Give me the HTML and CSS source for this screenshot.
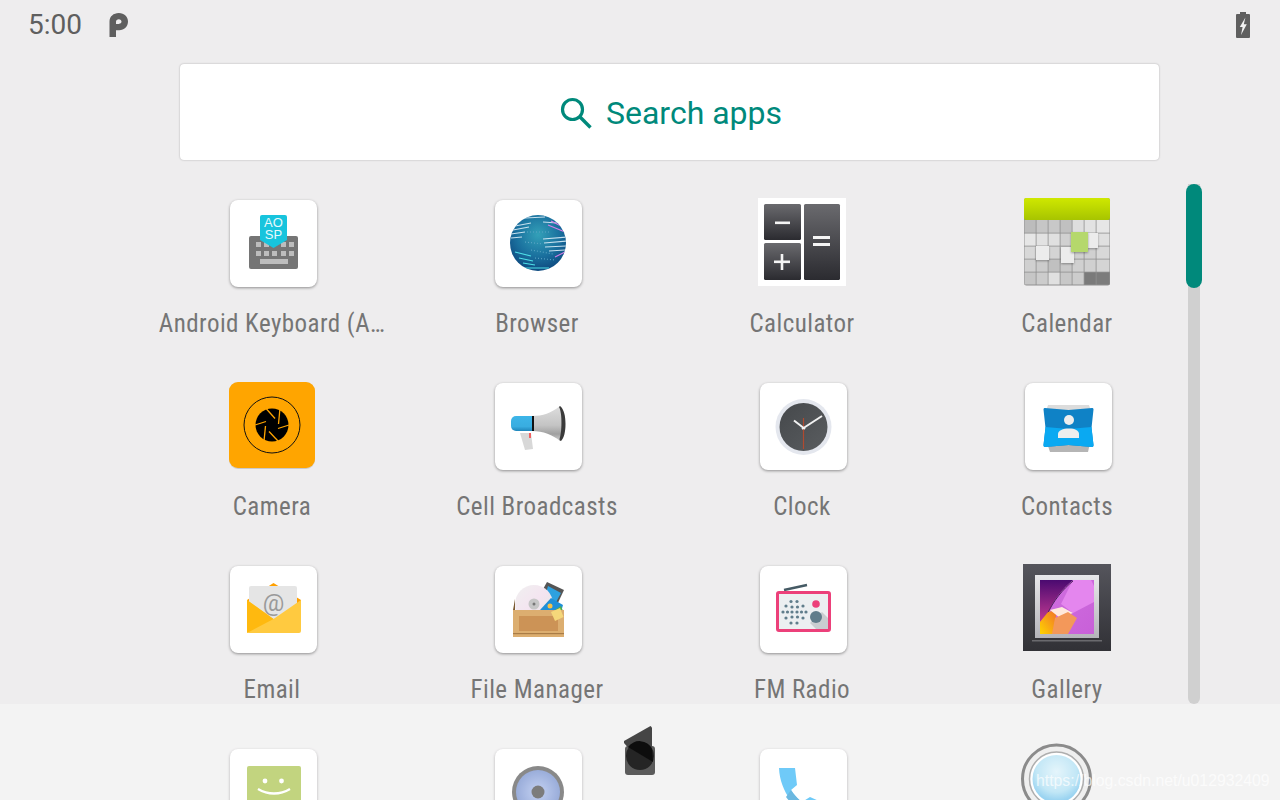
FILE: index.html
```html
<!DOCTYPE html>
<html lang="en">
<head>
<meta charset="utf-8">
<title>Apps</title>
<link rel="stylesheet" href="styles.css">
</head>
<body>
<div class="screen">
  <header class="status">
    <span class="time">5:00</span>
    <svg class="p-icon" width="20" height="26" viewBox="0 0 20 26"><path fill="#5f5f5f" d="M0.5 25V9.5C0.5 4.5 4.5 1 9.8 1 15.3 1 19 4.8 19 9.6 19 14.6 15.2 18.2 10.2 18.2H7V25ZM7 11.9H9.8C11.4 11.9 12.5 10.9 12.5 9.6 12.5 8.3 11.4 7.3 9.8 7.3 8.2 7.3 7 8.3 7 9.6Z"/></svg>
    <svg class="battery" width="14" height="26" viewBox="0 0 14 26"><path fill="#5f5f5f" d="M4 0H10V2H13A1 1 0 0 1 14 3V25A1 1 0 0 1 13 26H1A1 1 0 0 1 0 25V3A1 1 0 0 1 1 2H4Z"/><path fill="#f2f2f2" d="M9.4 5.5 3.8 15H6.6L5 23 10.8 12.2H7.8Z"/></svg>
  </header>

  <div class="search">
    <svg width="32" height="32" viewBox="0 0 32 32"><circle cx="12.5" cy="12.5" r="10" fill="none" stroke="#00897b" stroke-width="3.2"/><path d="M19.8 19.8 30.5 30.5" stroke="#00897b" stroke-width="3.4" fill="none"/></svg>
    <span class="search-text">Search apps</span>
  </div>

  <main class="grid">
    <div class="app">
      <div class="icon tile">
        <svg viewBox="0 0 87 87" width="87" height="87">
          <rect x="19" y="36" width="49" height="33" rx="2" fill="#757575"/>
          <g fill="#bdbdbd">
            <rect x="26" y="42" width="5" height="5"/><rect x="34" y="42" width="5" height="5"/><rect x="51" y="42" width="5" height="5"/><rect x="59" y="42" width="5" height="5"/>
            <rect x="26" y="51" width="5" height="5"/><rect x="34" y="51" width="5" height="5"/><rect x="42" y="51" width="5" height="5"/><rect x="51" y="51" width="5" height="5"/><rect x="59" y="51" width="5" height="5"/>
            <rect x="30" y="59" width="28" height="5"/>
          </g>
          <path d="M32 15H55A2 2 0 0 1 57 17V40L43.5 48 30 40V17A2 2 0 0 1 32 15Z" fill="#17c4dd"/>
          <text class="aosp"><tspan x="43.5" y="27">AO</tspan><tspan x="43.5" y="39">SP</tspan></text>
        </svg>
      </div>
      <span class="label">Android Keyboard (A…</span>
    </div>

    <div class="app">
      <div class="icon tile">
        <svg viewBox="0 0 87 87" width="87" height="87">
          <defs>
            <radialGradient id="globe" cx="50%" cy="35%" r="65%"><stop offset="0" stop-color="#33a0b8"/><stop offset=".6" stop-color="#1a709e"/><stop offset="1" stop-color="#0e4a80"/></radialGradient>
            <clipPath id="globeclip"><circle cx="43" cy="43" r="28"/></clipPath>
          </defs>
          <circle cx="43" cy="43" r="28" fill="url(#globe)"/>
          <g clip-path="url(#globeclip)" fill="none" stroke-width="1.1">
            <g stroke="#c6e0ee">
              <path d="M20 26 36 23"/><path d="M18 30 34 27"/><path d="M16 34 30 32"/><path d="M16 38 27 37"/>
              <path d="M48 39 72 37"/><path d="M49 43 72 41"/><path d="M50 47 71 46"/><path d="M54 51 70 50"/>
              <path d="M30 18 50 17"/><path d="M48 22 62 23"/>
            </g>
            <g stroke="#d67ee6"><path d="M56 21 68 27"/><path d="M53 25 70 32"/><path d="M60 57 70 52"/></g>
            <g stroke="#4fe0e8"><path d="M20 52 36 56"/><path d="M24 58 38 61"/><path d="M28 63 40 65"/><path d="M30 68 54 68"/></g>
            <g stroke="#5da6c6" stroke-dasharray="1 2"><path d="M32 32 54 32"/><path d="M30 42 48 44"/><path d="M36 50 58 54"/><path d="M40 58 60 60"/></g>
          </g>
        </svg>
      </div>
      <span class="label">Browser</span>
    </div>

    <div class="app">
      <div class="icon">
        <svg viewBox="0 0 88 88" width="88" height="88">
          <defs><linearGradient id="calc" x1="0" y1="0" x2="0" y2="1"><stop offset="0" stop-color="#6a6a6e"/><stop offset="1" stop-color="#2b2b30"/></linearGradient></defs>
          <rect width="88" height="88" fill="#fff"/>
          <rect x="6" y="6" width="37" height="36" rx="1.5" fill="url(#calc)"/>
          <rect x="6" y="45" width="37" height="37" rx="1.5" fill="url(#calc)"/>
          <rect x="46" y="6" width="36" height="76" rx="1.5" fill="url(#calc)"/>
          <g fill="#f4f4f4">
            <rect x="17" y="23.5" width="15" height="2.6"/>
            <rect x="16" y="62.5" width="16" height="2.6"/><rect x="22.7" y="56" width="2.6" height="16"/>
            <rect x="55" y="38" width="17" height="3"/><rect x="55" y="45" width="17" height="3"/>
          </g>
        </svg>
      </div>
      <span class="label">Calculator</span>
    </div>

    <div class="app">
      <div class="icon">
        <svg viewBox="0 0 88 88" width="88" height="88">
          <defs>
            <linearGradient id="calg" x1="0" y1="0" x2="0" y2="1"><stop offset="0" stop-color="#cfe800"/><stop offset="1" stop-color="#a7c400"/></linearGradient>
            <filter id="sh" x="-30%" y="-30%" width="160%" height="160%"><feDropShadow dx="0" dy="1" stdDeviation="1.2" flood-color="#000" flood-opacity=".35"/></filter>
          </defs>
          <rect x="1" y="0" width="86" height="87.5" rx="2.5" fill="#8f8f8f"/>
          <g>
            <path fill="#bcbcbc" d="M1.5 22H12.7V34.7H1.5Z"/><path fill="#c6c6c6" d="M13.5 22H24.7V34.7H13.5Z"/><path fill="#c8c8c8" d="M25.5 22H36.7V34.7H25.5Z"/><path fill="#c0c0c0" d="M37.5 22H48.7V34.7H37.5Z"/><path fill="#dedede" d="M49.5 22H60.7V34.7H49.5Z"/><path fill="#e2e2e2" d="M61.5 22H72.7V34.7H61.5Z"/><path fill="#e6e6e6" d="M73.5 22H86.5V34.7H73.5Z"/>
            <path fill="#e6e6e6" d="M1.5 35.5H12.7V47.7H1.5Z"/><path fill="#e2e2e2" d="M13.5 35.5H24.7V47.7H13.5Z"/><path fill="#e0e0e0" d="M25.5 35.5H36.7V47.7H25.5Z"/><path fill="#d0d0d0" d="M37.5 35.5H48.7V47.7H37.5Z"/><path fill="#d6d6d6" d="M49.5 35.5H60.7V47.7H49.5Z"/><path fill="#d8d8d8" d="M61.5 35.5H72.7V47.7H61.5Z"/><path fill="#e0e0e0" d="M73.5 35.5H86.5V47.7H73.5Z"/>
            <path fill="#d8d8d8" d="M1.5 48.5H12.7V60.7H1.5Z"/><path fill="#dcdcdc" d="M13.5 48.5H24.7V60.7H13.5Z"/><path fill="#d4d4d4" d="M25.5 48.5H36.7V60.7H25.5Z"/><path fill="#cccccc" d="M37.5 48.5H48.7V60.7H37.5Z"/><path fill="#d0d0d0" d="M49.5 48.5H60.7V60.7H49.5Z"/><path fill="#d0d0d0" d="M61.5 48.5H72.7V60.7H61.5Z"/><path fill="#d8d8d8" d="M73.5 48.5H86.5V60.7H73.5Z"/>
            <path fill="#d0d0d0" d="M1.5 61.5H12.7V73.7H1.5Z"/><path fill="#cccccc" d="M13.5 61.5H24.7V73.7H13.5Z"/><path fill="#c0c0c0" d="M25.5 61.5H36.7V73.7H25.5Z"/><path fill="#c8c8c8" d="M37.5 61.5H48.7V73.7H37.5Z"/><path fill="#d0d0d0" d="M49.5 61.5H60.7V73.7H49.5Z"/><path fill="#d0d0d0" d="M61.5 61.5H72.7V73.7H61.5Z"/><path fill="#d4d4d4" d="M73.5 61.5H86.5V73.7H73.5Z"/>
            <path fill="#c6c6c6" d="M1.5 74.5H12.7V86.5H1.5Z"/><path fill="#cccccc" d="M13.5 74.5H24.7V86.5H13.5Z"/><path fill="#e0e0e0" d="M25.5 74.5H36.7V86.5H25.5Z"/><path fill="#c8c8c8" d="M37.5 74.5H48.7V86.5H37.5Z"/><path fill="#cccccc" d="M49.5 74.5H60.7V86.5H49.5Z"/><path fill="#7a7a7a" d="M61.5 74.5H72.7V86.5H61.5Z"/><path fill="#7c7c7c" d="M73.5 74.5H86.5V86.5H73.5Z"/>
          </g>
          <rect x="1" y="0" width="86" height="22" rx="2" fill="url(#calg)"/>
          <rect x="13" y="48" width="13" height="14" fill="#ececec" filter="url(#sh)"/>
          <rect x="38" y="49" width="13" height="16" fill="#ececec" filter="url(#sh)"/>
          <rect x="64" y="35" width="11" height="15" fill="#ececec" filter="url(#sh)"/>
          <rect x="48" y="34" width="17" height="20" fill="#b5d86c" filter="url(#sh)"/>
        </svg>
      </div>
      <span class="label">Calendar</span>
    </div>

    <div class="app">
      <div class="icon">
        <svg viewBox="0 0 88 88" width="88" height="88">
          <defs><filter id="sh2" x="-10%" y="-10%" width="120%" height="120%"><feDropShadow dx="0" dy="0.5" stdDeviation="0.7" flood-color="#000" flood-opacity=".3"/></filter></defs>
          <rect x="1" y="1" width="86" height="86" rx="9" fill="#ffa500" filter="url(#sh2)"/>
          <circle cx="44" cy="44" r="28" fill="none" stroke="#111" stroke-width="1"/>
          <circle cx="44" cy="44" r="16.5" fill="#000"/>
          <g stroke="#ffa500" stroke-width="1.3">
            <path d="M47 37.5 38.5 28"/><path d="M50.5 43 52 27"/><path d="M50 47.5 61 44"/><path d="M41 50.5 50 60"/><path d="M37.5 45 36 60"/><path d="M38 40.5 27 44"/>
          </g>
        </svg>
      </div>
      <span class="label">Camera</span>
    </div>

    <div class="app">
      <div class="icon tile">
        <svg viewBox="0 0 87 87" width="87" height="87">
          <defs>
            <linearGradient id="bell" x1="0" y1="0" x2="0" y2="1"><stop offset="0" stop-color="#dedede"/><stop offset=".55" stop-color="#c4c4c4"/><stop offset=".8" stop-color="#a0a0a0"/><stop offset="1" stop-color="#d0d0d0"/></linearGradient>
            <linearGradient id="blue" x1="0" y1="0" x2="0" y2="1"><stop offset="0" stop-color="#3db5e8"/><stop offset=".7" stop-color="#39ade0"/><stop offset="1" stop-color="#1f86bb"/></linearGradient>
          </defs>
          <path d="M25 50H36L38 66 30 67Z" fill="#d8d8d8"/>
          <rect x="34" y="50" width="2" height="5" fill="#f06060"/>
          <path d="M37 33C48 33 56 30 65 23 69 30 69 50 65 58 58 52 48 48 37 48Z" fill="url(#bell)"/>
          <path d="M65 23C69 26 70.5 33 70.5 41 70.5 49 69 55 66 58 65 58 64.5 57 64.5 56 67 50 67.5 30 64 24Z" fill="#3a3a3a"/>
          <path d="M21 33H37V48H21A5 5 0 0 1 16 43V38A5 5 0 0 1 21 33Z" fill="url(#blue)"/>
          <rect x="37" y="33" width="2" height="15" fill="#111"/>
        </svg>
      </div>
      <span class="label">Cell Broadcasts</span>
    </div>

    <div class="app">
      <div class="icon tile">
        <svg viewBox="0 0 87 87" width="87" height="87">
          <defs><linearGradient id="face" x1="0" y1="0" x2="1" y2="1"><stop offset="0" stop-color="#45484b"/><stop offset="1" stop-color="#5a5d60"/></linearGradient></defs>
          <circle cx="43.5" cy="44" r="28" fill="#e4e7ee"/>
          <circle cx="43.5" cy="44" r="24" fill="url(#face)"/>
          <path d="M43.5 35V66" stroke="#b04a30" stroke-width="1.2"/>
          <path d="M42 46 62 33" stroke="#f2f2f2" stroke-width="2"/>
          <path d="M45 46 34 37.5" stroke="#f2f2f2" stroke-width="2"/>
        </svg>
      </div>
      <span class="label">Clock</span>
    </div>

    <div class="app">
      <div class="icon tile">
        <svg viewBox="0 0 87 87" width="87" height="87">
          <path d="M23 22H64L66 28H21Z" fill="#dcdcdc"/>
          <path d="M22 60H65L63 69H25Z" fill="#b5b5b5"/>
          <path d="M20 25 43.5 27 67 25C68 25 68.5 25.5 68.5 26.5L66.5 45 68.5 62C68.5 63 68 64 67 64L43.5 62 20 64C19 64 18.5 63 18.5 62L20.5 45 18.5 26.5C18.5 25.5 19 25 20 25Z" fill="#0f82c6"/>
          <path d="M20.5 44 43.5 46 66.5 44 68.5 62C68.5 63 68 64 67 64L43.5 62 20 64C19 64 18.5 63 18.5 62Z" fill="#0aa9f2"/>
          <circle cx="44" cy="37" r="5" fill="#eeeeee"/>
          <path d="M33 55V51C33 47.5 38 45.5 44 45.5 50 45.5 54 47.5 54 51V55Z" fill="#eeeeee"/>
        </svg>
      </div>
      <span class="label">Contacts</span>
    </div>

    <div class="app">
      <div class="icon tile">
        <svg viewBox="0 0 87 87" width="87" height="87">
          <path d="M17 34 43.5 17 71 34V50H17Z" fill="#ffa000"/>
          <rect x="19" y="20" width="48" height="36" rx="2" fill="#e5e5e5"/>
          <text x="43.5" y="45" class="at">@</text>
          <path d="M17 34 43.5 53 71 34V65A2 2 0 0 1 69 67H19A2 2 0 0 1 17 65Z" fill="#ffca40"/>
          <path d="M17 34 43.5 53 17 67Z" fill="#ffb90f"/>
        </svg>
      </div>
      <span class="label">Email</span>
    </div>

    <div class="app">
      <div class="icon tile">
        <svg viewBox="0 0 87 87" width="87" height="87">
          <defs><linearGradient id="cd" x1="0" y1="0" x2="1" y2="1"><stop offset="0" stop-color="#f0f0f0"/><stop offset=".5" stop-color="#f4e4f0"/><stop offset="1" stop-color="#dfe8df"/></linearGradient></defs>
          <path d="M47 25 52 16 69 24 61 41 48 38Z" fill="#555"/>
          <path d="M51 27 53 20 66 27 60 38 50 34Z" fill="#2ea1e0"/>
          <circle cx="39" cy="38" r="19" fill="url(#cd)"/>
          <circle cx="39" cy="38" r="5.5" fill="#c6c6c6"/><circle cx="39" cy="38" r="1.5" fill="#777"/>
          <path d="M45 44 56 32 68 39 66 46Z" fill="#1f8fd8"/>
          <circle cx="55" cy="40" r="2.5" fill="#f5c24a"/>
          <path d="M60 44 66 40 68 45Z" fill="#4caf50"/>
          <path d="M18 44 20 33V44Z" fill="#7b5a32"/>
          <rect x="18" y="44" width="51" height="27" fill="#dcae70"/>
          <rect x="24" y="50" width="39" height="15" fill="#cc9356"/>
          <rect x="18" y="67" width="51" height="1.2" fill="#a97c46"/>
          <path d="M56 46 65 42 68.5 51 60 55Z" fill="#f5d77a"/>
        </svg>
      </div>
      <span class="label">File Manager</span>
    </div>

    <div class="app">
      <div class="icon tile">
        <svg viewBox="0 0 87 87" width="87" height="87">
          <path d="M24 24 47 19" stroke="#455a64" stroke-width="2.4"/>
          <rect x="17.5" y="26.5" width="52" height="38" rx="1.5" fill="#eceff1" stroke="#ec407a" stroke-width="3"/>
          <path d="M50 57 62 46 68 52V63H56Z" fill="#c9cdd0"/>
          <g fill="#607d8b">
            <circle cx="31" cy="35.5" r="1.6"/><circle cx="37" cy="35.5" r="1.6"/>
            <circle cx="26" cy="40" r="1.6"/><circle cx="32" cy="41" r="1.6"/><circle cx="37.5" cy="41" r="1.6"/><circle cx="43" cy="40" r="1.6"/>
            <circle cx="23" cy="46" r="1.6"/><circle cx="27.5" cy="46" r="1.6"/><circle cx="32" cy="46" r="1.6"/><circle cx="37" cy="46" r="1.6"/><circle cx="41.5" cy="46" r="1.6"/><circle cx="46" cy="46" r="1.6"/>
            <circle cx="26" cy="52" r="1.6"/><circle cx="32" cy="51" r="1.6"/><circle cx="37.5" cy="51" r="1.6"/><circle cx="43" cy="52" r="1.6"/>
            <circle cx="31" cy="57" r="1.6"/><circle cx="37" cy="57" r="1.6"/>
          </g>
          <circle cx="56" cy="38" r="3.8" fill="#ec407a"/>
          <circle cx="56" cy="51" r="6" fill="#607d8b"/>
        </svg>
      </div>
      <span class="label">FM Radio</span>
    </div>

    <div class="app">
      <div class="icon">
        <svg viewBox="0 0 88 88" width="88" height="88">
          <defs>
            <linearGradient id="frame" x1="0" y1="0" x2="0" y2="1"><stop offset="0" stop-color="#55555c"/><stop offset="1" stop-color="#313136"/></linearGradient>
            <linearGradient id="silver" x1="0" y1="0" x2="0" y2="1"><stop offset="0" stop-color="#e8e8ea"/><stop offset="1" stop-color="#b4b4ba"/></linearGradient>
            <linearGradient id="pic" x1="0" y1="0" x2="1" y2="1"><stop offset="0" stop-color="#d070e0"/><stop offset="1" stop-color="#c860d8"/></linearGradient>
            <linearGradient id="night" x1="0" y1="0" x2="0" y2="1"><stop offset="0" stop-color="#4a0a70"/><stop offset="1" stop-color="#c43a92"/></linearGradient>
            <linearGradient id="swoosh" x1="0" y1="1" x2="1" y2="0"><stop offset="0" stop-color="#ffd400"/><stop offset="1" stop-color="#f0702a"/></linearGradient>
          </defs>
          <rect x="0" y="0" width="88" height="87" fill="url(#frame)"/>
          <rect x="9" y="76" width="70" height="1.5" fill="#6a6a6e"/>
          <rect x="12" y="11" width="64" height="63" fill="url(#silver)"/>
          <rect x="17" y="16" width="54" height="54" fill="url(#pic)"/>
          <path d="M50 16 68 16 71 22V38L50 49 38 40Z" fill="#e486ee"/>
          <path d="M17 16H50C40 24 30 36 24 51L17 58Z" fill="url(#night)"/>
          <path d="M50 17C40 25 30 37 24 51" fill="none" stroke="#2a0a3a" stroke-width="0.8"/>
          <path d="M17 70V58L25 48 34 46 30 70Z" fill="url(#swoosh)"/>
          <path d="M27 46 39 43 50 49 37 54Z" fill="#ffe9dc"/>
          <path d="M32 54 45 48 54 54 45 70H29Z" fill="#f3985a"/>
        </svg>
      </div>
      <span class="label">Gallery</span>
    </div>

    <div class="app">
      <div class="icon tile">
        <svg viewBox="0 0 87 87" width="87" height="87">
          <rect x="17" y="17" width="54" height="54" rx="2" fill="#a5c043"/>
          <circle cx="35" cy="32" r="2.4" fill="#fff"/><circle cx="51.5" cy="32" r="2.4" fill="#fff"/>
          <path d="M28 40C38 46 50 46 60 40" stroke="#fff" stroke-width="2.4" fill="none"/>
        </svg>
      </div>
    </div>

    <div class="app">
      <div class="icon tile">
        <svg viewBox="0 0 87 87" width="87" height="87">
          <defs><radialGradient id="cone" cx="50%" cy="50%" r="50%"><stop offset="0" stop-color="#a8bcec"/><stop offset="1" stop-color="#6a86c8"/></radialGradient></defs>
          <circle cx="43" cy="43" r="26" fill="#525252"/>
          <circle cx="43" cy="43" r="22" fill="url(#cone)"/>
          <circle cx="43" cy="43" r="6.5" fill="#3f3f3f"/>
        </svg>
      </div>
    </div>

    <div class="app">
      <div class="icon tile">
        <svg viewBox="0 0 87 87" width="87" height="87">
          <path d="M19 19H35L37 36 31 41C35 47 38 50 42 53L50 48 68 56V70H60C38 66 20 44 19 19Z" fill="#2bb2f5"/>
          <path d="M31 41C35 47 38 50 42 53L34 58 26 48Z" fill="#2797d2"/>
        </svg>
      </div>
    </div>

    <div class="app">
      <div class="icon">
        <svg class="magnify" viewBox="0 0 88 88" width="88" height="88">
          <defs><radialGradient id="lens" cx="50%" cy="35%" r="60%"><stop offset="0" stop-color="#d8f0fa"/><stop offset=".7" stop-color="#a6dcf2"/><stop offset="1" stop-color="#6abfea"/></radialGradient></defs>
          <circle cx="33.5" cy="32" r="34" fill="#e8e8e8" stroke="#555" stroke-width="3"/>
          <circle cx="33.5" cy="32" r="27" fill="#fff" stroke="#888" stroke-width="1.5"/>
          <circle cx="33.5" cy="32" r="24" fill="url(#lens)"/>
        </svg>
      </div>
    </div>
  </main>

  <div class="scrollbar"><div class="thumb"></div></div>

  <footer class="dock">
    <svg width="34" height="52" viewBox="0 0 34 52">
      <rect x="2" y="21" width="30" height="29" rx="3" fill="#5b5b5b"/>
      <path d="M1 16 27.5 1 29 2.5V26H8L1 18Z" fill="#454545"/>
      <circle cx="17" cy="31" r="14" fill="#252525"/>
      <path d="M5 22A14 14 0 0 1 29 24L30 37Z" fill="#0d0d0d"/>
    </svg>
  </footer>

  <span class="watermark">https://blog.csdn.net/u012932409</span>
</div>
</body>
</html>
```

FILE: styles.css
```css
* {
  box-sizing: border-box;
}

html,
body {
  margin: 0;
  padding: 0;
}

body {
  background: #eeedee;
  font-family: Roboto, "Noto Sans", sans-serif;
}

.screen {
  position: relative;
  display: flex;
  flex-direction: column;
  width: 1280px;
  height: 800px;
  overflow: hidden;
  background: #eeedee;
}

.status {
  display: flex;
  align-items: center;
  flex: 0 0 50px;
  padding: 0 30px 0 28px;
}

.time {
  font-size: 28px;
  color: #5f5f5f;
  line-height: 50px;
}

.p-icon {
  margin-left: 27px;
}

.battery {
  margin-left: auto;
}

.search {
  display: flex;
  flex: 0 0 96px;
  align-items: center;
  justify-content: center;
  gap: 14px;
  width: 979px;
  margin: 14px 0 0 180px;
  padding: 2px 0 0 3px;
  background: #fff;
  border-radius: 4px;
  box-shadow: 0 0 2px rgba(0, 0, 0, 0.3);
}

.search-text {
  font-size: 32px;
  color: #00897b;
}

.grid {
  display: grid;
  grid-template-columns: repeat(4, 265px);
  grid-auto-rows: 183px;
  flex: none;
  margin: 38px 0 0 140px;
}

.app {
  display: flex;
  flex-direction: column;
  align-items: center;
  padding-right: 1px;
}

.icon {
  width: 88px;
  height: 88px;
  flex: none;
}

.icon svg {
  display: block;
}

.magnify {
  overflow: visible;
}

.tile {
  position: relative;
  width: 87px;
  height: 87px;
  margin: 2px -1px -1px 2px;
  background: #fff;
  border-radius: 8px;
  box-shadow: 0 1px 3px rgba(0, 0, 0, 0.4);
}

.label {
  margin-top: 22px;
  font-size: 25px;
  font-stretch: 75%;
  line-height: 32px;
  color: #757575;
  white-space: nowrap;
  letter-spacing: 0.45px;
}

.aosp {
  font-family: "Liberation Sans", sans-serif;
  font-size: 13px;
  fill: #e8f9fc;
  text-anchor: middle;
}

.at {
  font-family: Roboto, sans-serif;
  font-size: 24px;
  fill: #9a9a9a;
  text-anchor: middle;
}

.scrollbar {
  position: absolute;
  top: 184px;
  left: 1186px;
  width: 16px;
  height: 520px;
  display: flex;
  justify-content: center;
}

.scrollbar::before {
  content: "";
  position: absolute;
  top: 0;
  bottom: 0;
  left: 2px;
  right: 2px;
  background: #d0d0d0;
  border-radius: 0 0 6px 6px;
}

.thumb {
  position: relative;
  width: 16px;
  height: 104px;
  background: #00897b;
  border-radius: 8px;
}

.dock {
  position: absolute;
  left: 0;
  right: 0;
  bottom: 0;
  height: 96px;
  padding-top: 21px;
  display: flex;
  justify-content: center;
  background: rgba(255, 255, 255, 0.32);
}

.watermark {
  position: absolute;
  left: 1036px;
  top: 771px;
  font-family: "Liberation Sans", sans-serif;
  font-size: 15.8px;
  line-height: 20px;
  color: rgba(255, 255, 255, 0.7);
}
```
